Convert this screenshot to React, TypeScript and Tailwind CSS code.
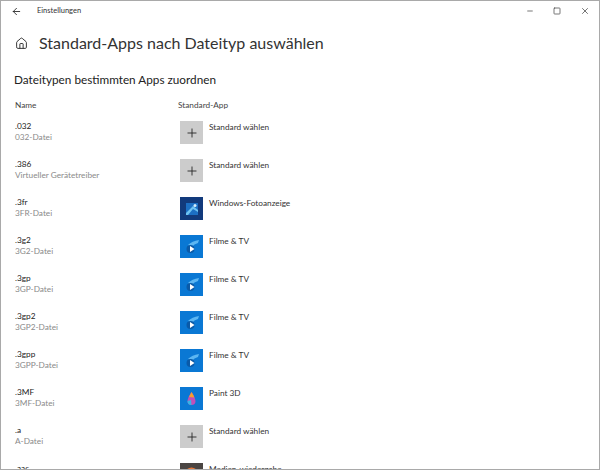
import { ArrowLeft, House, Minus, Plus, Square, X } from "lucide-react";

type Row = { ext: string; type: string; app: string; icon: "plus" | "photos" | "movies" | "paint" | "media" };

const rows: Row[] = [
  { ext: ".032", type: "032-Datei", app: "Standard wählen", icon: "plus" },
  { ext: ".386", type: "Virtueller Gerätetreiber", app: "Standard wählen", icon: "plus" },
  { ext: ".3fr", type: "3FR-Datei", app: "Windows-Fotoanzeige", icon: "photos" },
  { ext: ".3g2", type: "3G2-Datei", app: "Filme & TV", icon: "movies" },
  { ext: ".3gp", type: "3GP-Datei", app: "Filme & TV", icon: "movies" },
  { ext: ".3gp2", type: "3GP2-Datei", app: "Filme & TV", icon: "movies" },
  { ext: ".3gpp", type: "3GPP-Datei", app: "Filme & TV", icon: "movies" },
  { ext: ".3MF", type: "3MF-Datei", app: "Paint 3D", icon: "paint" },
  { ext: ".a", type: "A-Datei", app: "Standard wählen", icon: "plus" },
  { ext: ".aac", type: "AAC-Datei", app: "Medien-wiedergabe", icon: "media" },
];

function AppIcon({ icon }: { icon: Row["icon"] }) {
  if (icon === "plus") {
    return (
      <div className="flex h-[23px] w-[23px] items-center justify-center bg-[#cccccc]">
        <Plus size={14} strokeWidth={1.5} className="text-[#222222]" />
      </div>
    );
  }
  if (icon === "photos") {
    return (
      <div className="h-[23px] w-[23px] bg-[#123a7c]">
        <svg viewBox="0 0 23 23" className="h-full w-full">
          <rect x="6" y="6" width="12" height="12" fill="#1c6fc4" />
          <path d="M6 16 L13 9 L18 13 L18 15 L13 12 L8 18 L6 18 Z" fill="#6fc3f2" />
          <circle cx="15" cy="8.5" r="1.5" fill="#d8eefc" />
        </svg>
      </div>
    );
  }
  if (icon === "movies") {
    return (
      <div className="h-[23px] w-[23px] bg-[#0a78d4]">
        <svg viewBox="0 0 23 23" className="h-full w-full">
          <path d="M8 10 Q12 6 19 5 L18 8 Q14 9 12 12 Z" fill="#5cb6f2" />
          <circle cx="10.5" cy="14" r="4" fill="#0a5aa8" />
          <path d="M10 11 L14.5 14 L10 17 Z" fill="#ffffff" />
        </svg>
      </div>
    );
  }
  if (icon === "paint") {
    return (
      <div className="h-[23px] w-[23px] bg-[#0a78d4]">
        <svg viewBox="0 0 23 23" className="h-full w-full">
          <path d="M11.5 5 Q15.5 11 15.5 14 A4 4 0 0 1 7.5 14 Q7.5 11 11.5 5 Z" fill="#c04fb8" />
          <path d="M11.5 5 Q13.5 8 14.3 10.5 L9 10 Z" fill="#f5a02c" />
          <path d="M7.5 14 A4 4 0 0 0 11.5 18 L11 13 Z" fill="#35b6e6" />
        </svg>
      </div>
    );
  }
  return (
    <div className="h-[23px] w-[23px] bg-[#4a4542]">
      <svg viewBox="0 0 23 23" className="h-full w-full">
        <circle cx="11.5" cy="11.5" r="6" fill="none" stroke="#e8793a" strokeWidth="2" />
      </svg>
    </div>
  );
}

export default function App() {
  return (
    <div className="h-[470px] w-[600px] overflow-hidden border border-[#a9a9a9] bg-white font-['Lato','Open_Sans',sans-serif] text-[#1a1a1a]">
      {/* Title bar */}
      <div className="flex h-[20px] items-center">
        <div className="flex w-[36px] justify-center pr-[6px]">
          <ArrowLeft size={11} strokeWidth={1.8} />
        </div>
        <span className="text-[7.5px] text-[#333333]">Einstellungen</span>
        <div className="ml-auto flex items-center gap-[19px] pr-[9px] text-[#444444]">
          <Minus size={8} strokeWidth={2.2} />
          <Square size={8} strokeWidth={2.2} />
          <X size={10} strokeWidth={1.8} />
        </div>
      </div>

      {/* Heading */}
      <div className="mt-[8px] flex h-[28px] items-center pl-[14px]">
        <House size={13} strokeWidth={1.8} className="text-[#333333]" />
        <h1 className="ml-[11px] whitespace-nowrap text-[16px] leading-none text-[#333333]">
          Standard-Apps nach Dateityp auswählen
        </h1>
      </div>

      <h2 className="mt-[14px] pl-[13px] text-[11.75px] leading-[18px] text-[#222222]">
        Dateitypen bestimmten Apps zuordnen
      </h2>

      <div className="mt-[10px] flex pl-[14px] text-[8.25px] leading-[12px] text-[#444444]">
        <span className="w-[163px]">Name</span>
        <span>Standard-App</span>
      </div>

      {/* File types */}
      <div className="mt-[10px] flex flex-col gap-[15px]">
        {rows.map((row) => (
          <div key={row.ext} className="flex h-[23px] pl-[14px]">
            <div className="w-[165px]">
              <div className="text-[8.25px] leading-[11px] text-[#222222]">{row.ext}</div>
              <div className="text-[8.25px] leading-[11px] text-[#8a8a8a]">{row.type}</div>
            </div>
            <AppIcon icon={row.icon} />
            <span className="ml-[6px] mt-[1px] text-[8.25px] leading-[11px] text-[#333333]">{row.app}</span>
          </div>
        ))}
      </div>
    </div>
  );
}
